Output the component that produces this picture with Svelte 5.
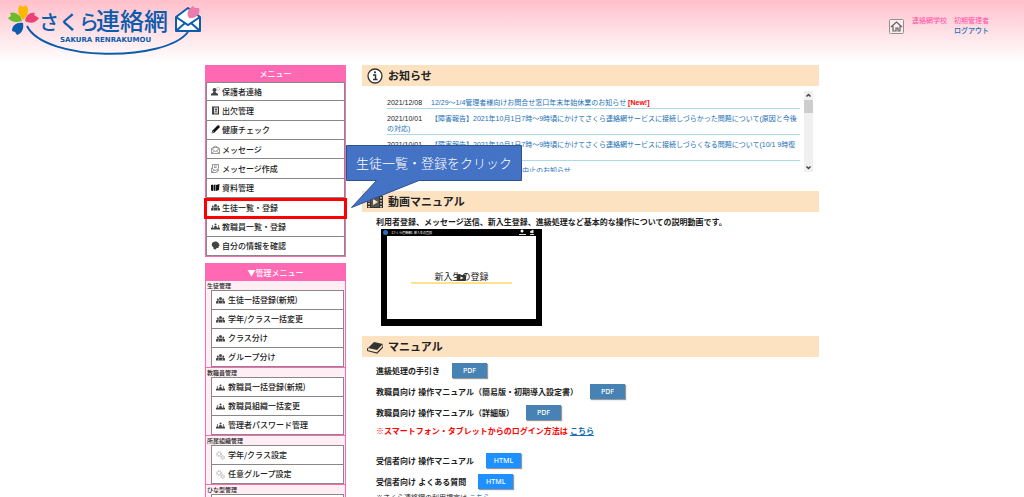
<script>
  const menu = [
    { label: '保護者連絡', icon: 'guardian' },
    { label: '出欠管理', icon: 'book' },
    { label: '健康チェック', icon: 'pen' },
    { label: 'メッセージ', icon: 'mail' },
    { label: 'メッセージ作成', icon: 'compose' },
    { label: '資料管理', icon: 'files' },
    { label: '生徒一覧・登録', icon: 'students', active: true },
    { label: '教職員一覧・登録', icon: 'staff' },
    { label: '自分の情報を確認', icon: 'head' }
  ];

  const adminMenu = [
    {
      title: '生徒管理',
      icon: 'students',
      items: ['生徒一括登録(新規)', '学年/クラス一括変更', 'クラス分け', 'グループ分け']
    },
    {
      title: '教職員管理',
      icon: 'staff',
      items: ['教職員一括登録(新規)', '教職員組織一括変更', '管理者パスワード管理']
    },
    {
      title: '所属組織管理',
      icon: 'gears',
      items: ['学年/クラス設定', '任意グループ設定']
    },
    { title: 'ひな型管理', icon: 'mail', items: ['ひな型一覧'] }
  ];

  const news = [
    {
      date: '2021/12/08',
      text: '12/29～1/4管理者様向けお問合せ窓口年末年始休業のお知らせ',
      isNew: true
    },
    {
      date: '2021/10/01',
      text: '【障害報告】2021年10月1日7時～9時頃にかけてさくら連絡網サービスに接続しづらかった問題について(原因と今後の対応)'
    },
    {
      date: '2021/10/01',
      text: '【障害報告】2021年10月1日7時～9時頃にかけてさくら連絡網サービスに接続しづらくなる問題について(10/1 9時復旧)'
    },
    { date: '2021/09/15', text: '【重要】定期メンテナンスの中止のお知らせ' }
  ];

  const staffManuals = [
    '進級処理の手引き',
    '教職員向け 操作マニュアル（簡易版・初期導入設定書）',
    '教職員向け 操作マニュアル（詳細版）'
  ];

  const receiverManuals = ['受信者向け 操作マニュアル', '受信者向け よくある質問'];
</script>

{#snippet icon(name)}
  <svg class="icon" viewBox="0 0 18 18" aria-hidden="true">
    {#if name === 'guardian'}
      <circle cx="7" cy="6" r="4" fill="#444" />
      <path d="M0 17v-3c2-2 4-2 5-4h4c1 2 3 2 5 4v3z" fill="#444" />
      <circle cx="14.5" cy="3.5" r="3" fill="none" stroke="#999" />
    {:else if name === 'book'}
      <path d="M2 1h14v16H2z" fill="#333" />
      <path d="M6 3h8v12H6z" fill="#ddd" />
      <circle cx="10" cy="7" r="2" fill="#333" />
      <path d="M7 13c0-4 6-4 6 0zM3 4h2M3 8h2M3 12h2" fill="#333" stroke="#ddd" />
    {:else if name === 'pen'}
      <path d="M1 17l2-6 8-8 2-2c3-1 5 1 4 4l-3 3-7 7z" fill="#111" />
      <path d="M1 17l5-5" stroke="#fff" />
    {:else if name === 'mail'}
      <path d="M1 7l8-5 8 5v10H1zM1 8l8 5 8-5M1 17l6-5M17 17l-6-5M4 8V5h10v3" fill="none" stroke="#777" stroke-width="1.4" />
    {:else if name === 'compose'}
      <path d="M3 1h12v7M3 1v8M1 8l7 5 8-4M1 8v9h10M1 17l6-5M6 4h6M6 7h5" fill="none" stroke="#777" stroke-width="1.5" />
      <path d="M10 16l5-6 2 2-5 5z" fill="#999" />
    {:else if name === 'files'}
      <path d="M0 4l4-1v13l-4-1zM5 4l4-1v13l-4-1zM10 4l7-2-1 12-6 2z" fill="#111" />
    {:else if name === 'students'}
      <circle cx="9" cy="5" r="3" fill="#444" />
      <circle cx="3.5" cy="7" r="2" fill="#444" />
      <circle cx="14.5" cy="7" r="2" fill="#444" />
      <path d="M0 15v-4l3-2h12l3 2v4z" fill="#444" />
      <path d="M5 15v-4M13 15v-4" stroke="#fff" />
    {:else if name === 'staff'}
      <circle cx="9" cy="5" r="2" fill="#444" />
      <circle cx="3" cy="8" r="1.5" fill="#444" />
      <circle cx="15" cy="8" r="1.5" fill="#444" />
      <path d="M0 15v-3l3-2 3 2 1-4h4l1 4 3-2 3 2v3z" fill="#444" />
    {:else if name === 'head'}
      <path d="M5 16v-3C-1 9 1 2 8 1c7 0 9 5 9 9l-2 1v3h-4l-1 3z" fill="#444" />
    {:else if name === 'gears'}
      <circle cx="6" cy="6" r="4" fill="none" stroke="#bbb" stroke-width="3" stroke-dasharray="2 1" />
      <circle cx="13" cy="13" r="3" fill="none" stroke="#bbb" stroke-width="3" stroke-dasharray="2 1" />
    {/if}
  </svg>
{/snippet}

<div class="page">
  <header>
    <a class="logo" href="#top" aria-label="さくら連絡網">
      <svg width="210" height="60" viewBox="0 0 210 60">
        <path d="M27 26C45 62 165 62 188 32" fill="none" stroke="#0b5cad" stroke-width="2" />
        <path d="M23 20c-5-4-6-11-3-15l3 2 3-2c4 4 2 11-3 15z" fill="#fbb800" />
        <path d="M25 21c1-6 5-9 10-8l-1 2 5 3c-3 5-9 6-14 3z" fill="#ea4276" />
        <path d="M22 21c-6 2-11 1-14-3l3-2-1-3c5-2 11 2 12 8z" fill="#6dbb2c" />
        <path d="M23 23c1 6-1 10-6 12l-2-3-3-1c0-6 5-9 11-8z" fill="#0b5cad" />
        <text class="logo-kana" x="39" y="30">さくら</text>
        <text class="logo-kanji" x="96" y="30">連絡網</text>
        <text class="logo-sub" x="60" y="42">SAKURA RENRAKUMOU</text>
        <path d="M176 17l12-9 12 9v14h-24z" fill="#fff" stroke="#0b5cad" stroke-width="2" stroke-linejoin="round" />
        <path d="M176 17l12 8 12-8M176 31l9-8M200 31l-9-8" fill="none" stroke="#0b5cad" stroke-width="2" />
        <path d="M189 18c-3-5-1-9 4-12l2 2 4 0c2 6-3 11-10 10z" fill="#ee7bad" />
      </svg>
    </a>
    <div class="account">
      <a class="home" href="#home" aria-label="ホーム">
        <svg width="15" height="15" viewBox="0 0 15 15">
          <rect x="0.5" y="0.5" width="14" height="14" rx="1" fill="#f7eeee" stroke="#998b8e" />
          <path d="M2 8l5.5-5L13 8M4 7v5h3V9h2v3h2V7" fill="none" stroke="#665f60" stroke-width="1.2" />
        </svg>
      </a>
      <div class="user">
        <span>連絡網学校　初期管理者</span>
        <a href="#logout">ログアウト</a>
      </div>
    </div>
  </header>

  <div class="container">
    <aside>
      <nav class="menu">
        <h2>メニュー</h2>
        <ul class="main-list">
          {#each menu as item}
            <li class:active={item.active}>
              <a href="#menu">{@render icon(item.icon)}{item.label}</a>
              {#if item.active}
                <div class="callout">
                  <svg width="176" height="64" viewBox="0 0 176 64" aria-hidden="true">
                    <path d="M.5.5H175.5V35.5H73L5.5 62.5L30.5 35.5H.5z" fill="#4472c4" stroke="#2f528f" />
                  </svg>
                  <span>生徒一覧・登録をクリック</span>
                </div>
              {/if}
            </li>
          {/each}
        </ul>
      </nav>

      <nav class="menu admin">
        <h2>▼管理メニュー</h2>
        {#each adminMenu as group}
          <section class="group">
            <h3>{group.title}</h3>
            <ul>
              {#each group.items as label}
                <li><a href="#admin">{@render icon(group.icon)}{label}</a></li>
              {/each}
            </ul>
          </section>
        {/each}
      </nav>
    </aside>

    <main>
      <section>
        <h1>
          <svg class="title-icon" viewBox="0 0 16 16" aria-hidden="true">
            <circle cx="8" cy="8" r="7" fill="#fff" stroke="#333" stroke-width="1.3" />
            <path d="M6 7h2.5v4M6 11.5h4.5" fill="none" stroke="#333" stroke-width="1.5" />
            <circle cx="8" cy="4.3" r="1.1" fill="#333" />
          </svg>
          お知らせ
        </h1>
        <div class="news">
          <ul>
            {#each news as entry}
              <li>
                <time>{entry.date}</time><a href="#news">{entry.text}</a>
                {#if entry.isNew}<strong>[New!]</strong>{/if}
              </li>
            {/each}
          </ul>
          <div class="scrollbar" aria-hidden="true">
            <svg width="9" height="9" viewBox="0 0 9 9"><path d="M2.5 5.5l2-2 2 2" /></svg>
            <div class="thumb"></div>
            <svg width="9" height="9" viewBox="0 0 9 9"><path d="M2.5 3.5l2 2 2-2" /></svg>
          </div>
        </div>
      </section>

      <section class="movies">
        <h1>
          <svg class="title-icon" viewBox="0 0 16 16" aria-hidden="true">
            <path d="M0 2h16v12H0z" fill="#333" />
            <path d="M4 3h8v10H4z" fill="#555" />
            <path d="M2 3v11M14 3v11" stroke="#fde2c2" stroke-width="1.5" stroke-dasharray="1.5 1.5" />
            <path d="M6 5l5 3-5 3z" fill="#fde2c2" />
          </svg>
          動画マニュアル
        </h1>
        <p>利用者登録、メッセージ送信、新入生登録、進級処理など基本的な操作についての説明動画です。</p>
        <div class="video">
          <div class="video-bar">
            <i></i>
            <span>【さくら連絡網】新入生の登録</span>
            <svg width="18" height="7" viewBox="0 0 18 7" aria-hidden="true">
              <circle cx="4" cy="2" r="1.5" fill="#fff" />
              <path d="M1 5.5h7M12 5.5h4M12 3l3-2v3z" stroke="#ddd" fill="#fff" />
            </svg>
          </div>
          <div class="screen">
            <span>新入生の登録</span>
            <button class="play" aria-label="再生">
              <svg width="9" height="6" viewBox="0 0 9 6"><path d="M3.5 1.5l3 1.5-3 1.5z" fill="#fff" /></svg>
            </button>
          </div>
        </div>
      </section>

      <section class="manuals">
        <h1>
          <svg class="title-icon" viewBox="0 0 16 16" aria-hidden="true">
            <path d="M1 9l6-6 9 2-6 6z" fill="#333" />
            <path d="M1 9c-1 2-1 3 1 3l8 2 6-6V6" fill="none" stroke="#333" stroke-width="1.2" />
          </svg>
          マニュアル
        </h1>
        <div class="rows">
          {#each staffManuals as title}
            <div class="row">{title}<button class="pdf">PDF</button></div>
          {/each}
          <p class="notice">※スマートフォン・タブレットからのログイン方法は <a href="#login">こちら</a></p>
          {#each receiverManuals as title}
            <div class="row">{title}<button class="html">HTML</button></div>
          {/each}
          <p class="terms">※さくら連絡網の利用規定は <a href="#terms">こちら</a></p>
        </div>
      </section>
    </main>
  </div>
</div>

<style>
  :global(body) {
    margin: 0;
    background: #fff;
  }

  .page {
    height: 100vh;
    overflow: hidden;
    background: linear-gradient(#ffc0cb, #fff 62px);
    font-family: 'Liberation Sans', 'Noto Sans CJK JP', sans-serif;
    font-size: 8px;
    color: #222;
  }

  h1,
  h2,
  h3,
  p,
  ul {
    margin: 0;
    padding: 0;
    list-style: none;
  }

  a {
    color: #1a6fb5;
    text-decoration: none;
  }

  svg {
    display: block;
    flex: none;
  }

  header {
    display: flex;
    justify-content: space-between;
    height: 65px;
    padding-right: 35px;
  }

  .logo-kana,
  .logo-kanji {
    font-family: 'Noto Sans CJK JP', sans-serif;
    font-weight: 500;
    fill: #0b5cad;
  }

  .logo-kana {
    font-size: 20px;
  }

  .logo-kanji {
    font-size: 24px;
  }

  .logo-sub {
    font-family: 'DejaVu Sans', sans-serif;
    font-size: 7px;
    font-weight: bold;
    fill: #0b5cad;
  }

  .account {
    display: flex;
    gap: 8px;
    padding-top: 16px;
  }

  .home {
    padding-top: 3px;
  }

  .user {
    display: flex;
    flex-direction: column;
    align-items: flex-end;
    font-size: 7px;
    line-height: 10px;
    color: #ff4fa8;
  }

  .user a {
    font-weight: 500;
  }

  .container {
    display: flex;
    gap: 16px;
    max-width: 614px;
    margin: 0 auto;
  }

  aside {
    flex: 0 0 141px;
    display: flex;
    flex-direction: column;
    gap: 6px;
  }

  .menu {
    border: 1px solid #ff69b4;
    font-family: 'Noto Sans CJK JP', sans-serif;
  }

  .menu h2 {
    background: #ff69b4;
    color: #fff;
    font-size: 8px;
    line-height: 16px;
    text-align: center;
    font-weight: 500;
  }

  .main-list {
    display: grid;
    grid-auto-rows: 1fr;
    min-height: 174px;
  }

  .menu li {
    display: flex;
    position: relative;
    background: #fff;
    border: 1px solid #888;
    border-top-width: 0;
  }

  .menu li:first-child {
    border-top-width: 1px;
  }

  .menu li a {
    display: flex;
    flex: 1;
    align-items: center;
    gap: 2px;
    padding-left: 4px;
    line-height: 17px;
    color: #222;
    font-weight: 500;
  }

  .menu .active::after {
    content: '';
    position: absolute;
    z-index: 1;
    inset: 0 -3px -3px;
    border: 3px solid #f00;
  }

  .icon {
    width: 9px;
    height: 9px;
  }

  .callout {
    position: absolute;
    z-index: 1;
    left: 139px;
    bottom: 7px;
  }

  .callout span {
    position: absolute;
    inset: 0;
    font-size: 13px;
    font-weight: 300;
    line-height: 35px;
    color: #fff;
    text-align: center;
  }

  .admin h2 {
    line-height: 17px;
  }

  .group {
    padding: 0 1px 0 5px;
    background: #ffeff5;
    border-bottom: 1px solid #ff69b4;
  }

  .group h3 {
    margin-left: -4px;
    font-size: 6px;
    line-height: 9px;
    font-weight: 500;
  }

  .menu .group a {
    gap: 3px;
    line-height: 18px;
  }

  main {
    flex: 1;
    min-width: 0;
  }

  h1 {
    display: flex;
    align-items: center;
    gap: 5px;
    padding-left: 5px;
    background: #fde2c2;
    font-family: 'Noto Sans CJK JP', sans-serif;
    font-size: 11px;
    line-height: 21px;
  }

  .title-icon {
    width: 16px;
    height: 16px;
  }

  .news {
    display: flex;
    justify-content: space-between;
    gap: 4px;
    height: 81px;
    padding: 5px 6px 0 25px;
    font-size: 7px;
    line-height: 10px;
    overflow: hidden;
  }

  .news ul {
    flex: 1;
    padding-top: 2px;
  }

  .news li {
    padding-top: 5px;
    border-bottom: 1px solid #add8e6;
  }

  .news time {
    margin-right: 9px;
  }

  .news strong {
    color: #f00;
  }

  .scrollbar {
    display: flex;
    flex-direction: column;
    height: 81px;
    width: 9px;
    background: #f0f0f0;
  }

  .scrollbar path {
    fill: none;
    stroke: #444;
    stroke-width: 1.5;
  }

  .scrollbar .thumb {
    height: 13px;
    margin-bottom: auto;
    background: #cdcdcd;
  }

  .movies {
    padding-top: 19px;
  }

  .movies p {
    padding: 5px 0 0 14px;
    font-weight: bold;
    line-height: 12px;
  }

  .video {
    width: 149px;
    margin: 0 0 10px 19px;
    padding: 0 6px 7px;
    background: #000;
  }

  .video-bar {
    display: flex;
    align-items: center;
    gap: 2px;
    height: 7px;
    color: #fff;
    font-size: 3px;
  }

  .video-bar i {
    width: 5px;
    height: 5px;
    margin-left: -4px;
    border-radius: 50%;
    background: #2b6fc0;
  }

  .video-bar span {
    flex: 1;
  }

  .screen {
    display: grid;
    place-items: center;
    height: 83px;
    background: #fff;
    font-size: 9px;
  }

  .screen span,
  .play {
    grid-area: 1 / 1;
  }

  .screen span {
    padding: 0 23px;
    line-height: 10px;
    border-bottom: 2px solid #fde48c;
  }

  .play {
    padding: 0;
    border: 0;
    border-radius: 1px;
    background: #333;
  }

  .rows {
    padding: 3px 0 0 14px;
    font-weight: bold;
  }

  .row {
    display: flex;
    align-items: center;
    gap: 12px;
    height: 21px;
  }

  .row button {
    width: 35px;
    height: 15px;
    padding: 0;
    border: 0;
    box-shadow: 1px 1px 1px #999;
    color: #fff;
    font-family: 'Noto Sans', sans-serif;
    font-size: 7px;
    font-weight: 500;
    line-height: 15px;
  }

  .pdf {
    background: #4682b4;
  }

  .html {
    background: #1e90ff;
  }

  .notice {
    padding-bottom: 10px;
    line-height: 17px;
    color: #f00;
  }

  .rows a {
    text-decoration: underline;
  }

  .terms {
    font-size: 7px;
    font-weight: normal;
    line-height: 12px;
  }
</style>
